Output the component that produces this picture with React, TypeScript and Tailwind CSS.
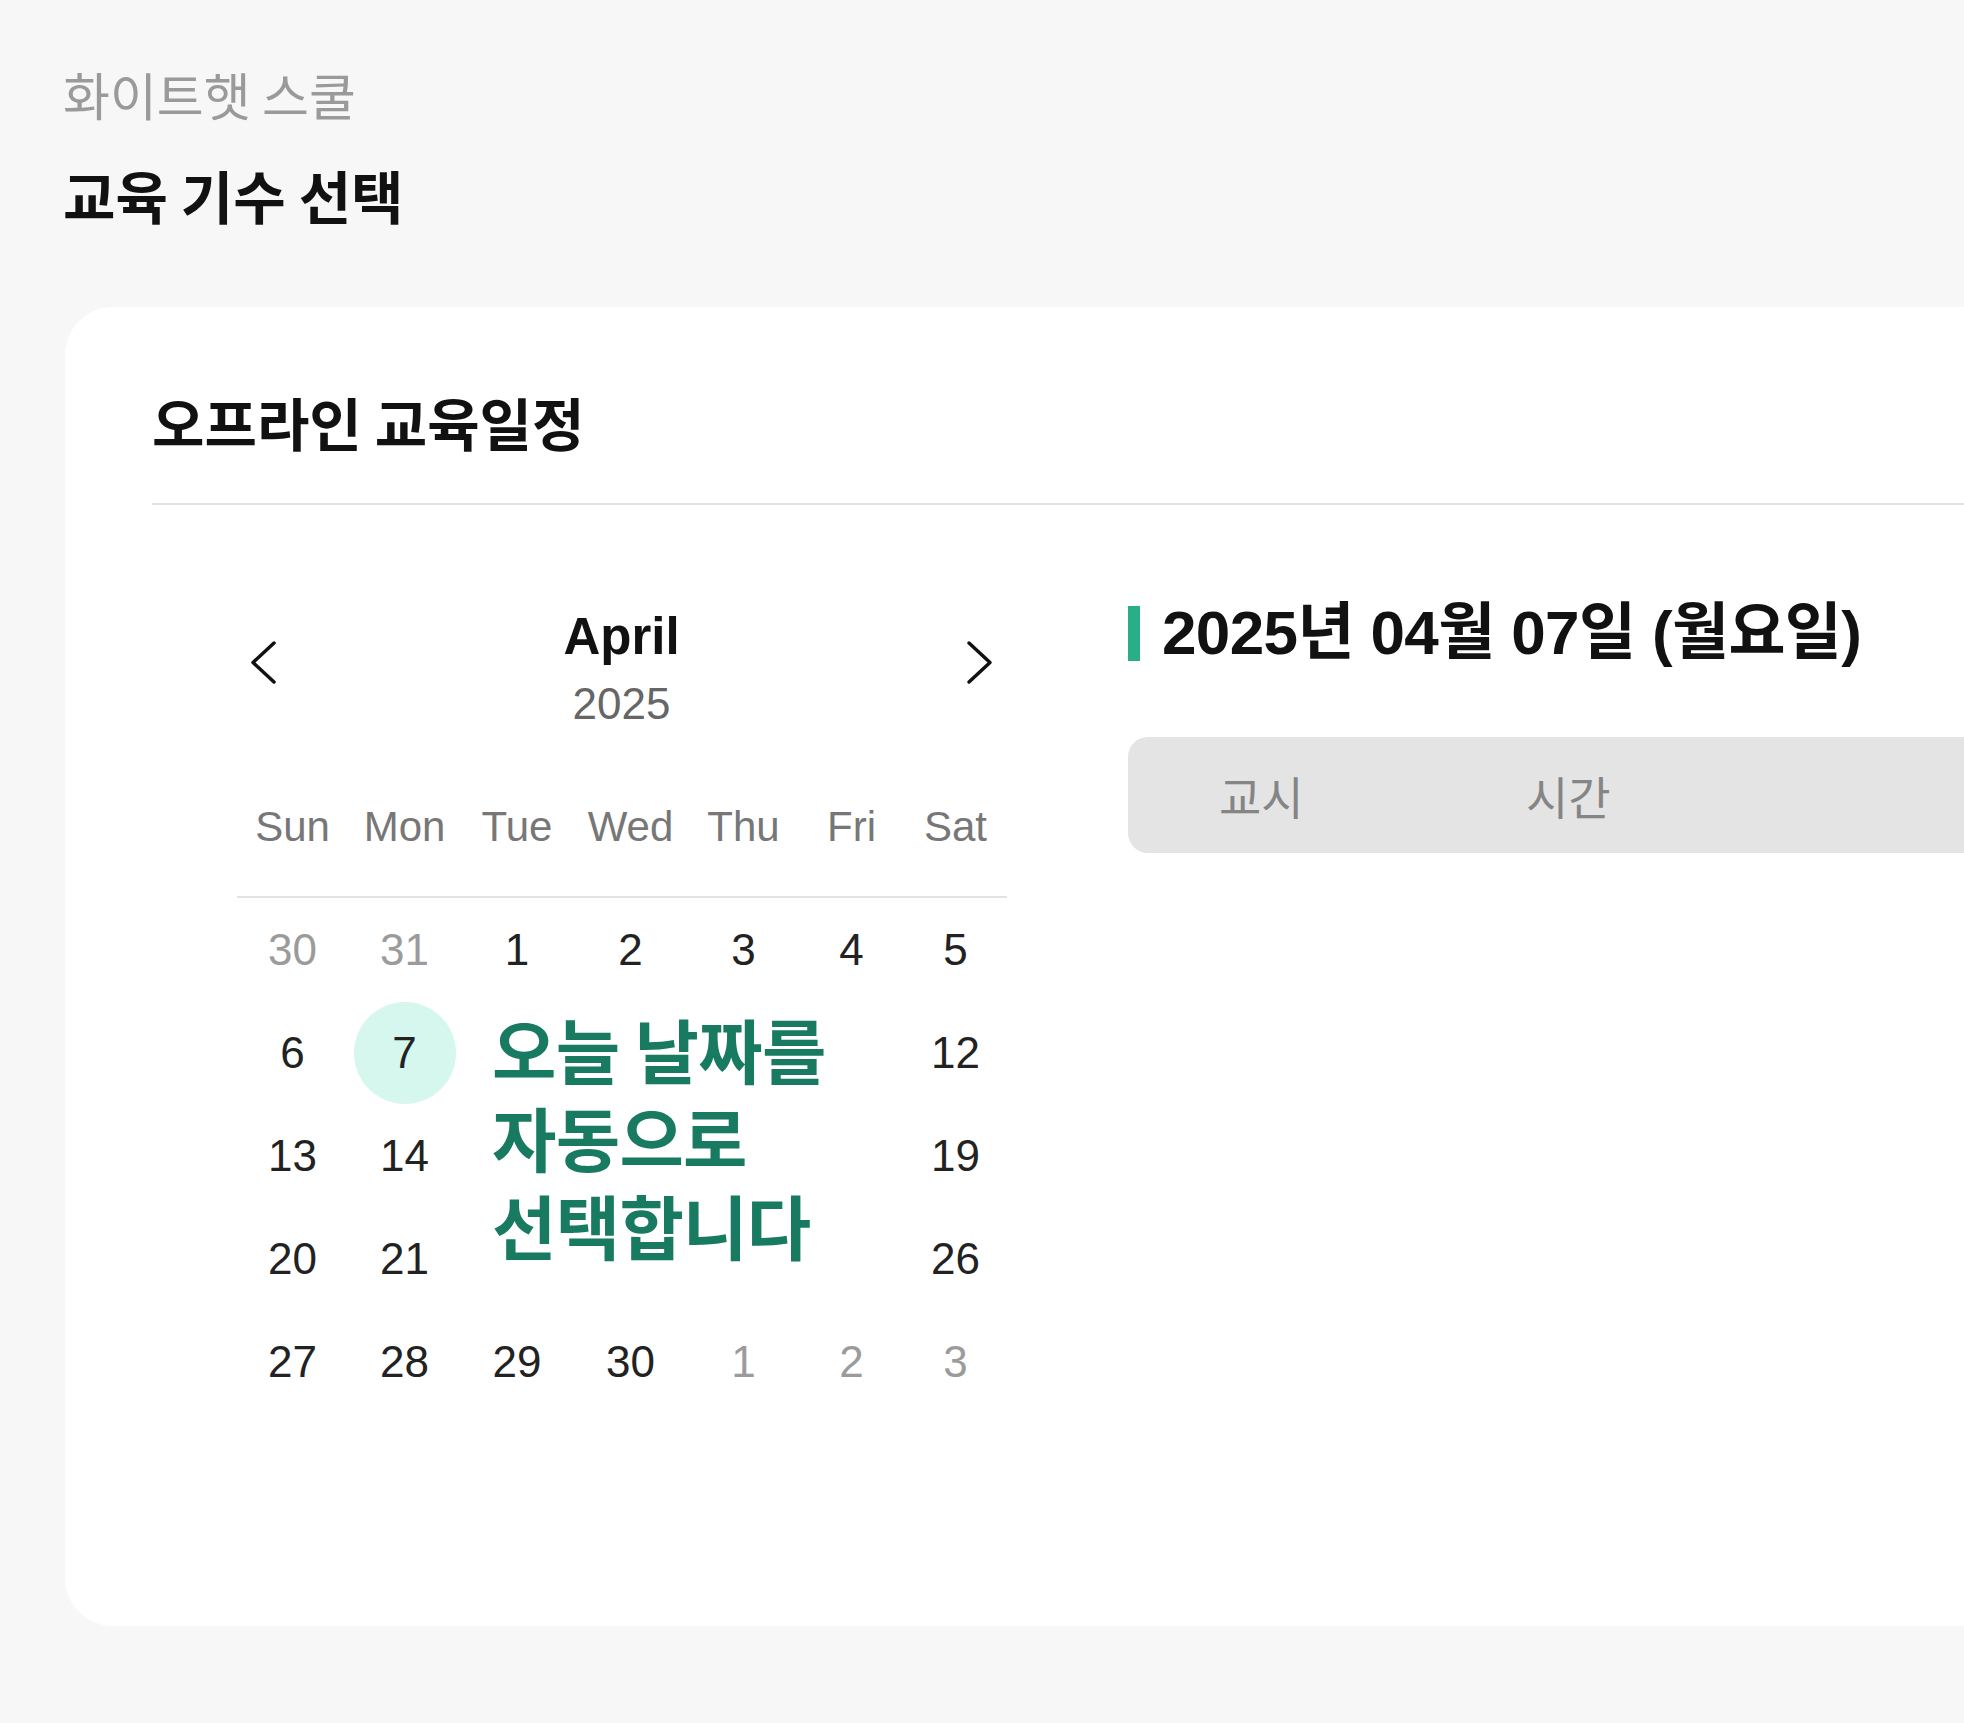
import React from "react";

const latin = "font-['Liberation_Sans','Noto_Sans_CJK_KR',sans-serif]";
const korean = "font-['Noto_Sans_CJK_KR','Liberation_Sans',sans-serif]";

const weekdays = ["Sun", "Mon", "Tue", "Wed", "Thu", "Fri", "Sat"];

// 달력에 보이는 날짜 (주석 영역에 가려진 날짜는 빼둠)
const days: { d: number; muted?: boolean; today?: boolean }[] = [
  { d: 30, muted: true },
  { d: 31, muted: true },
  { d: 1 },
  { d: 2 },
  { d: 3 },
  { d: 4 },
  { d: 5 },
  { d: 6 },
  { d: 7, today: true },
  { d: 12 },
  { d: 13 },
  { d: 14 },
  { d: 19 },
  { d: 20 },
  { d: 21 },
  { d: 26 },
  { d: 27 },
  { d: 28 },
  { d: 29 },
  { d: 30 },
  { d: 1, muted: true },
  { d: 2, muted: true },
  { d: 3, muted: true },
];

function Chevron({ dir }: { dir: "left" | "right" }) {
  return (
    <svg width="30" height="45" viewBox="0 0 30 45" fill="none" className="mt-[29px]">
      <path
        d={dir === "left" ? "M26 3 L5 22.5 L26 42" : "M4 3 L25 22.5 L4 42"}
        stroke="#111"
        strokeWidth="3.5"
        strokeLinecap="round"
        strokeLinejoin="round"
      />
    </svg>
  );
}

function Calendar() {
  return (
    <div className={`w-[770px] ml-[85px] pt-[11px] ${latin}`}>
      {/* 헤더: 이전/다음 달 */}
      <div className="flex justify-between items-start pl-[11px] pr-[12px]">
        <Chevron dir="left" />
        <div className="flex flex-col items-center">
          <span className="text-[51px] leading-none font-bold text-[#111]">April</span>
          <span className="mt-[20px] text-[44px] leading-none text-[#666]">2025</span>
        </div>
        <Chevron dir="right" />
      </div>

      <div className="grid grid-cols-[111px_113px_112px_115px_111px_105px_103px] mt-[80px]">
        {weekdays.map((w) => (
          <div key={w} className="text-center text-[42px] leading-none text-[#777]">
            {w}
          </div>
        ))}
      </div>
      <div className="h-[2px] bg-[#e3e3e3] mt-[48px]" />

      <div className="grid grid-cols-[111px_113px_112px_115px_111px_105px_103px] auto-rows-[103px]">
        <div className={`col-start-3 col-span-4 row-start-2 row-span-3 pl-[31px] pt-[4px] ${korean} text-[70px] leading-[88px] font-bold text-[#187a60] tracking-[-0.01em]`}>
          오늘 날짜를
          <br />
          자동으로
          <br />
          선택합니다
        </div>
        {days.map((item, i) => (
          <div key={i} className="flex items-center justify-center">
            {item.today ? (
              <span className="w-[102px] h-[102px] rounded-full bg-[#d5f7ee] flex items-center justify-center text-[44px] leading-none text-[#222]">
                {item.d}
              </span>
            ) : (
              <span
                className={
                  item.muted
                    ? "text-[44px] leading-none text-[#9b9b9b]"
                    : "text-[44px] leading-none text-[#222]"
                }
              >
                {item.d}
              </span>
            )}
          </div>
        ))}
      </div>
    </div>
  );
}

function SchedulePanel() {
  return (
    <div className="ml-[121px] flex-1">
      <div className="flex items-center gap-[22px] mt-[2px]">
        <span className="w-[12px] h-[55px] bg-[#2aae88]" />
        <h3 className={`${latin} text-[62px] leading-none font-bold text-[#111] tracking-[-0.01em]`}>
          2025년 04월 07일 (월요일)
        </h3>
      </div>
      <div className={`mt-[73px] h-[116px] rounded-[20px] bg-[#e4e4e4] flex items-center pl-[91px] ${korean} text-[46px] text-[#858585]`}>
        <span className="w-[307px]">교시</span>
        <span>시간</span>
      </div>
    </div>
  );
}

export default function App() {
  return (
    <div className="w-full h-[1723px] bg-[#f7f7f7] overflow-hidden">
      <div className="pt-[69px] pl-[63px]">
        <p className={`${korean} text-[51px] leading-none text-[#9a9a9a]`}>화이트햇 스쿨</p>
        <h1 className={`${korean} mt-[46px] text-[57px] leading-none font-bold text-[#111]`}>
          교육 기수 선택
        </h1>
      </div>

      <div className="ml-[65px] mt-[84px] w-[2200px] h-[1319px] rounded-[48px] bg-white pl-[87px] pt-[86px]">
        <h2 className={`${korean} text-[57px] leading-none font-bold text-[#111]`}>오프라인 교육일정</h2>
        <div className="mt-[53px] h-[2px] bg-[#e2e2e2]" />

        <div className="flex items-start mt-[95px]">
          <Calendar />
          <SchedulePanel />
        </div>
      </div>
    </div>
  );
}
